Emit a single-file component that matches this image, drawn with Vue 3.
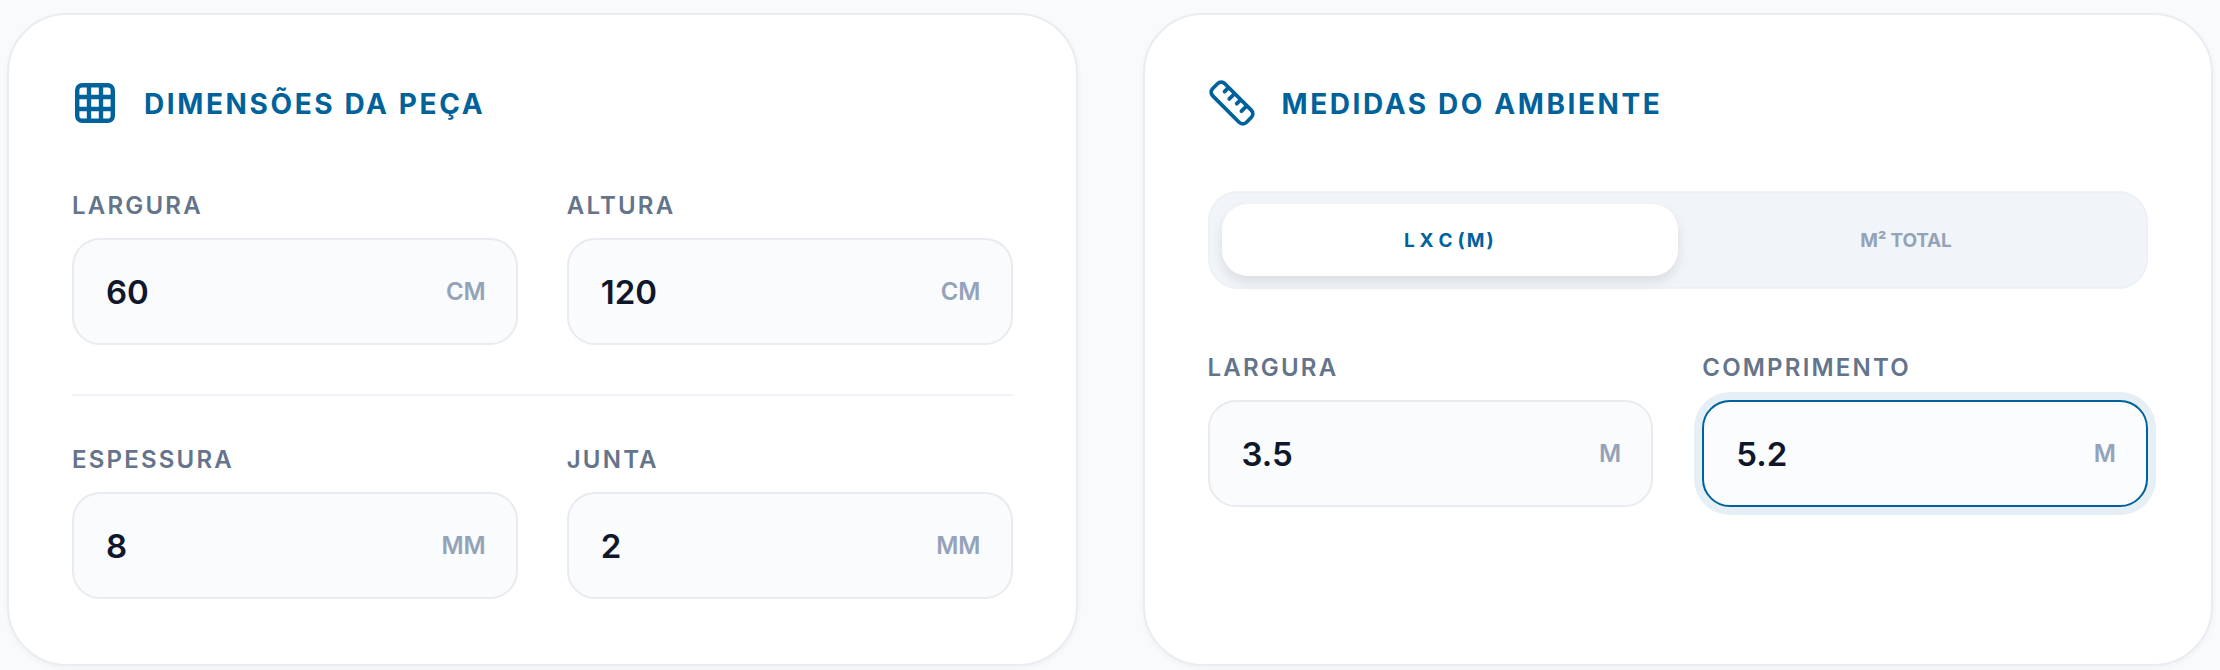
<template>
    <div class="page">
        <section class="card">
            <div class="card-title">
                <svg class="title-icon" viewBox="0 0 40 40" fill="none" stroke="currentColor" stroke-width="4.4">
                    <rect x="2.2" y="2.2" width="35.6" height="35.6" rx="5"></rect>
                    <line x1="14" y1="2" x2="14" y2="38"></line>
                    <line x1="26" y1="2" x2="26" y2="38"></line>
                    <line x1="2" y1="14" x2="38" y2="14"></line>
                    <line x1="2" y1="26" x2="38" y2="26"></line>
                </svg>
                <h2>Dimensões da Peça</h2>
            </div>
            <div class="field-row">
                <div v-for="f in pieceTop" :key="f.label" class="field">
                    <label>{{ f.label }}</label>
                    <div class="input-box">
                        <input v-model="f.value" type="text" />
                        <span class="unit">{{ f.unit }}</span>
                    </div>
                </div>
            </div>
            <div class="divider"></div>
            <div class="field-row">
                <div v-for="f in pieceBottom" :key="f.label" class="field">
                    <label>{{ f.label }}</label>
                    <div class="input-box">
                        <input v-model="f.value" type="text" />
                        <span class="unit">{{ f.unit }}</span>
                    </div>
                </div>
            </div>
        </section>

        <section class="card">
            <div class="card-title">
                <svg class="title-icon ruler" viewBox="0 0 44 44" fill="none" stroke="currentColor" stroke-width="4" stroke-linecap="round">
                    <g transform="rotate(45 22 22)">
                        <rect x="-3" y="13" width="50" height="18" rx="5.5"></rect>
                        <line x1="8" y1="14" x2="8" y2="19"></line>
                        <line x1="17" y1="14" x2="17" y2="21"></line>
                        <line x1="26" y1="14" x2="26" y2="19"></line>
                        <line x1="35" y1="14" x2="35" y2="21"></line>
                    </g>
                </svg>
                <h2>Medidas do Ambiente</h2>
            </div>
            <div class="toggle">
                <button class="toggle-btn active">L x C (m)</button>
                <button class="toggle-btn">M² Total</button>
            </div>
            <div class="field-row">
                <div v-for="f in room" :key="f.label" class="field">
                    <label>{{ f.label }}</label>
                    <div class="input-box" :class="{ focused: f.focused }">
                        <input v-model="f.value" type="text" />
                        <span class="unit">{{ f.unit }}</span>
                    </div>
                </div>
            </div>
        </section>
    </div>
</template>

<script setup>
import { ref } from 'vue'

const pieceTop = ref([
    { label: 'Largura', value: '60', unit: 'cm' },
    { label: 'Altura', value: '120', unit: 'cm' }
])

const pieceBottom = ref([
    { label: 'Espessura', value: '8', unit: 'mm' },
    { label: 'Junta', value: '2', unit: 'mm' }
])

const room = ref([
    { label: 'Largura', value: '3.5', unit: 'm' },
    { label: 'Comprimento', value: '5.2', unit: 'm', focused: true }
])
</script>

<style>
body {
    background: #f8fafc;
}
</style>

<style scoped>
.page {
    display: grid;
    grid-template-columns: minmax(0, 1fr) minmax(0, 1fr);
    gap: 65px;
    padding: 13px 7px 6px;
    font-family: "Inter", "Liberation Sans", sans-serif;
}

.card {
    background: #fff;
    border: 2px solid #e9edf2;
    border-radius: 60px;
    box-shadow: 0 2px 6px rgba(15, 23, 42, 0.04);
    padding: 63px 63px 65px;
    min-width: 0;
}

.card-title {
    display: flex;
    align-items: center;
    gap: 27px;
    height: 50px;
    margin-bottom: 63px;
    color: #00629b;
    padding-left: 3px;
}

.title-icon {
    width: 40px;
    height: 40px;
    flex-shrink: 0;
}

.ruler {
    width: 42px;
    height: 42px;
    overflow: visible;
}

.card-title h2 {
    margin: 2px 0 0 2px;
    font-size: 28px;
    font-weight: 700;
    letter-spacing: 2.6px;
    text-transform: uppercase;
    white-space: nowrap;
}

.field-row {
    display: grid;
    grid-template-columns: minmax(0, 1fr) minmax(0, 1fr);
    gap: 49px;
}

.field {
    display: flex;
    flex-direction: column;
    gap: 17px;
    min-width: 0;
}

.field label {
    height: 30px;
    line-height: 30px;
    font-size: 24px;
    font-weight: 600;
    letter-spacing: 2.2px;
    color: #64748b;
    text-transform: uppercase;
}

.input-box {
    display: flex;
    align-items: center;
    height: 107px;
    box-sizing: border-box;
    padding: 0 30px 0 32px;
    background: #f9fbfd;
    border: 2px solid #e8ebf0;
    border-radius: 28px;
}

.input-box.focused {
    background: #fbfcfe;
    border-color: #00629b;
    box-shadow: 0 0 0 8px #e5eff5;
}

.input-box input {
    flex: 1;
    width: 100%;
    min-width: 0;
    border: none;
    outline: none;
    background: transparent;
    padding: 0;
    font-family: inherit;
    font-size: 33px;
    font-weight: 600;
    color: #0f172a;
}

.unit {
    font-size: 24px;
    font-weight: 600;
    color: #94a3b8;
    text-transform: uppercase;
}

.divider {
    height: 2px;
    background: #f1f5f9;
    margin: 49px 0;
}

.toggle {
    display: flex;
    box-sizing: border-box;
    height: 98px;
    padding: 11px 12px;
    margin-bottom: 64px;
    background: #f1f5f9;
    border: 2px solid #edf1f5;
    border-radius: 30px;
}

.toggle-btn {
    flex: 1;
    min-width: 0;
    border: none;
    background: transparent;
    border-radius: 26px;
    font-family: inherit;
    font-size: 19px;
    font-weight: 700;
    letter-spacing: -0.2px;
    color: #94a3b8;
    text-transform: uppercase;
    cursor: pointer;
}

.toggle-btn.active {
    background: #fff;
    color: #00629b;
    letter-spacing: 1.7px;
    word-spacing: -3px;
    box-shadow: 0 6px 12px rgba(15, 23, 42, 0.1);
}
</style>
